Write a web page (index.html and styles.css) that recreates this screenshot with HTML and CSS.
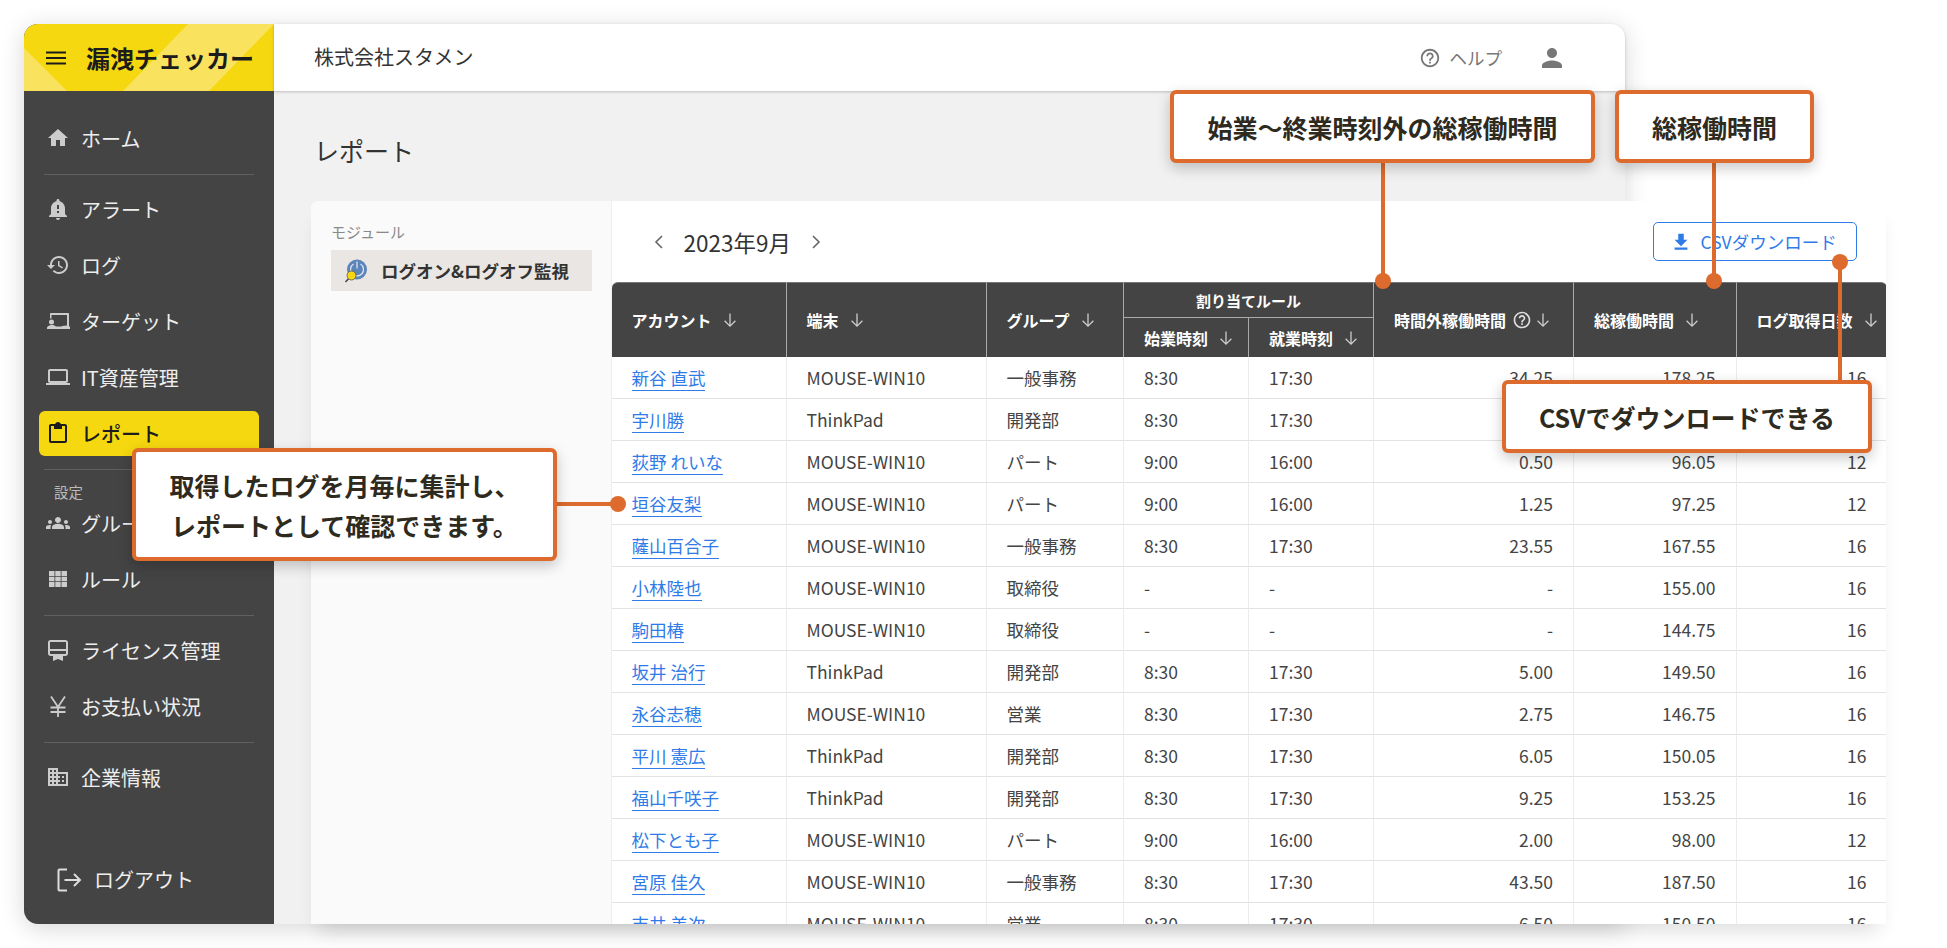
FILE: index.html
```html
<!DOCTYPE html>
<html lang="ja">
<head>
  <meta charset="UTF-8">
  <title>漏洩チェッカー レポート</title>
  <link rel="stylesheet" href="styles.css">
</head>
<body>

<svg class="defs" width="0" height="0">
  <symbol id="i-down" viewBox="0 0 16 16"><path d="M8 1.5v12.5M2.6 8.8 8 14.2l5.4-5.4" fill="none" stroke="currentColor" stroke-width="1.3"/></symbol>
  <symbol id="i-help" viewBox="0 0 24 24"><path fill="currentColor" d="M11 18h2v-2h-2v2zm1-16C6.48 2 2 6.48 2 12s4.48 10 10 10 10-4.48 10-10S17.52 2 12 2zm0 18c-4.41 0-8-3.59-8-8s3.59-8 8-8 8 3.59 8 8-3.59 8-8 8zm0-14c-2.21 0-4 1.79-4 4h2c0-1.1.9-2 2-2s2 .9 2 2c0 2-3 1.75-3 5h2c0-2.25 3-2.5 3-5 0-2.21-1.79-4-4-4z"/></symbol>
</svg>

<div class="app">
  <aside class="sidebar">
    <div class="logo">
      <svg class="logo-bg" viewBox="0 0 250 67" preserveAspectRatio="none">
        <path d="M164 0H250L185 67H99zM0 24 43 67H0z" fill="#f9e25e"/>
      </svg>
      <svg class="menu-icon" viewBox="0 0 24 24"><path fill="currentColor" d="M2 18.5h20v-2H2zm0-5.5h20v-2H2zM2 5.500v2h20v-2z"/></svg>
      <span class="logo-text">漏洩チェッカー</span>
    </div>

    <nav class="nav">
      <div class="nav-group">
        <a class="nav-item"><svg viewBox="0 0 24 24"><path d="M10 20v-6h4v6h5v-8h3L12 3 2 12h3v8z"/></svg>ホーム</a>
      </div>
      <div class="nav-group">
        <a class="nav-item"><svg viewBox="0 0 24 24"><path d="M12 23c1.100 0 1.990-.89 1.990-1.990h-3.980c0 1.100.89 1.990 1.990 1.990zm7-6v-6c0-3.350-2.360-6.150-5.500-6.830V3.500C13.500 2.670 12.830 2 12 2s-1.500.67-1.500 1.500v.67C7.360 4.850 5 7.650 5 11v6l-2 2v1h18v-1l-2-2zm-6-1h-2v-2h2v2zm0-4h-2V8h2v4z"/></svg>アラート</a>
        <a class="nav-item"><svg viewBox="0 0 24 24"><path d="M13 3c-4.970 0-9 4.030-9 9H1l3.890 3.890.07.14L9 12H6c0-3.870 3.130-7 7-7s7 3.130 7 7-3.130 7-7 7c-1.930 0-3.680-.79-4.940-2.060l-1.420 1.420C8.270 19.990 10.510 21 13 21c4.970 0 9-4.030 9-9s-4.030-9-9-9zm-1 5v5l4.280 2.540.72-1.210-3.500-2.080V8H12z"/></svg>ログ</a>
        <a class="nav-item"><svg viewBox="0 0 24 24"><path d="M5 4h17c.6 0 1 .4 1 1v12.500h1V20H1v-1c0-2 3-3 5-3s3 .7 4 1.500h6V17l5-.5V6H5.500v3.500H4V5c0-.6.4-1 1-1zM5.500 10.500a2.500 2.500 0 1 1 0 5 2.500 2.500 0 0 1 0-5z"/></svg>ターゲット</a>
        <a class="nav-item"><svg viewBox="0 0 24 24"><path d="M20 18c1.100 0 1.990-.9 1.990-2L22 6c0-1.100-.9-2-2-2H4c-1.100 0-2 .9-2 2v10c0 1.100.9 2 2 2H0v2h24v-2h-4zM4 6h16v10H4V6z"/></svg>IT資産管理</a>
        <a class="nav-item active"><svg viewBox="0 0 24 24"><path d="M19 3h-4.180C14.400 1.840 13.300 1 12 1c-1.300 0-2.400.84-2.820 2H5c-1.100 0-2 .9-2 2v15c0 1.100.9 2 2 2h14c1.100 0 2-.9 2-2V5c0-1.100-.9-2-2-2zm0 17H5V5h3v3h8V5h3v15z"/></svg>レポート</a>
      </div>
      <div class="nav-group">
        <div class="nav-label">設定</div>
        <a class="nav-item"><svg viewBox="0 0 24 24"><path d="M12 12.750c1.630 0 3.070.39 4.240.9 1.080.48 1.760 1.560 1.760 2.730V18H6v-1.610c0-1.180.68-2.260 1.760-2.730 1.170-.52 2.610-.91 4.240-.91zM4 13c1.100 0 2-.9 2-2s-.9-2-2-2-2 .9-2 2 .9 2 2 2zm1.130 1.100c-.37-.06-.74-.1-1.130-.1-.99 0-1.930.21-2.780.58C.48 14.900 0 15.620 0 16.430V18h4.500v-1.610c0-.83.23-1.610.63-2.290zM20 13c1.100 0 2-.9 2-2s-.9-2-2-2-2 .9-2 2 .9 2 2 2zm4 3.430c0-.81-.48-1.530-1.220-1.850-.85-.37-1.790-.58-2.780-.58-.39 0-.76.04-1.130.1.4.68.63 1.460.63 2.290V18H24v-1.570zM12 6c1.660 0 3 1.340 3 3s-1.340 3-3 3-3-1.340-3-3 1.340-3 3-3z"/></svg>グループ</a>
        <a class="nav-item"><svg viewBox="0 0 24 24"><path d="M3 4h5.500v5H3zM9.300 4h5.400v5H9.300zM15.500 4H21v5h-5.500zM3 9.800h5.500v4.400H3zM9.300 9.800h5.400v4.400H9.300zM15.500 9.800H21v4.400h-5.500zM3 15h5.500v5H3zM9.300 15h5.400v5H9.300zM15.500 15H21v5h-5.500z"/></svg>ルール</a>
      </div>
      <div class="nav-group">
        <a class="nav-item"><svg viewBox="0 0 24 24"><path d="M4.500 2h15C20.900 2 22 3.100 22 4.500v11c0 1.400-1.100 2.500-2.500 2.500H17v5l-5-2-5 2v-5H4.500C3.100 18 2 16.900 2 15.500v-11C2 3.100 3.100 2 4.500 2zM4 4v7h16V4zm0 9v2.500c0 .3.200.5.500.5h15c.3 0 .5-.2.500-.5V13z"/></svg>ライセンス管理</a>
        <a class="nav-item"><svg viewBox="0 0 24 24"><path d="M5 2.500 12 13l7-10.500M4.500 13.500h15M4.500 18h15M12 13v10" fill="none" stroke="#ccc" stroke-width="1.800"/></svg>お支払い状況</a>
      </div>
      <div class="nav-group last">
        <a class="nav-item"><svg viewBox="0 0 24 24"><path d="M12 7V3H2v18h20V7H12zM6 19H4v-2h2v2zm0-4H4v-2h2v2zm0-4H4V9h2v2zm0-4H4V5h2v2zm4 12H8v-2h2v2zm0-4H8v-2h2v2zm0-4H8V9h2v2zm0-4H8V5h2v2zm10 12h-8v-2h2v-2h-2v-2h2v-2h-2V9h8v10zm-2-8h-2v2h2v-2zm0 4h-2v2h2v-2z"/></svg>企業情報</a>
      </div>
    </nav>

    <a class="logout">
      <svg viewBox="0 0 26 26"><path d="M11 2.500H3.500a1 1 0 0 0-1 1v19a1 1 0 0 0 1 1H11M8.500 13H24M18 7l6 6-6 6" fill="none" stroke="#ddd" stroke-width="2"/></svg>
      ログアウト
    </a>
  </aside>

  <main class="main">
    <header class="topbar">
      <span class="company">株式会社スタメン</span>
      <div class="top-actions">
        <span class="help"><svg><use href="#i-help"/></svg>ヘルプ</span>
        <svg class="user" viewBox="0 0 24 24"><path fill="currentColor" d="M12 12c2.210 0 4-1.790 4-4s-1.790-4-4-4-4 1.790-4 4 1.790 4 4 4zm0 2c-2.670 0-8 1.340-8 4v2h16v-2c0-2.660-5.330-4-8-4z"/></svg>
      </div>
    </header>

    <h1 class="page-title">レポート</h1>

    <section class="card">
      <div class="modules">
        <div class="modules-label">モジュール</div>
        <div class="module">
          <svg viewBox="0 0 26 26">
            <circle cx="14" cy="11.500" r="10" fill="#5d84b8"/>
            <path d="M14 3.500v7M10.500 6a6.500 6.500 0 1 0 7 0" fill="none" stroke="#d8e4f2" stroke-width="1.300"/>
            <path d="M8 18 2.500 24" stroke="#444" stroke-width="1.500"/>
            <circle cx="8.500" cy="17.500" r="4.500" fill="#f5d80f" stroke="#555" stroke-width=".8"/>
          </svg>
          ログオン&amp;ログオフ監視
        </div>
      </div>

      <div class="report">
        <div class="toolbar">
          <div class="month">
            <svg class="chev" viewBox="0 0 10 16"><path d="M8 2 2 8l6 6" fill="none" stroke="currentColor" stroke-width="1.600"/></svg>
            <span class="month-text">2023年9月</span>
            <svg class="chev" viewBox="0 0 10 16"><path d="m2 2 6 6-6 6" fill="none" stroke="currentColor" stroke-width="1.600"/></svg>
          </div>
          <button class="csv-btn">
            <svg viewBox="0 0 24 24"><path fill="currentColor" d="M5 20.500h14v-2.500H5zM19 9.500h-4V3H9v6.500H5l7 7z"/></svg>
            CSVダウンロード
          </button>
        </div>

        <table class="log-table">
          <colgroup>
            <col class="c1"><col class="c2"><col class="c3"><col class="c4"><col class="c5"><col class="c6"><col class="c7"><col class="c8">
          </colgroup>
          <thead>
            <tr class="head-top">
              <th rowspan="2"><div class="th-in">アカウント<svg class="sort"><use href="#i-down"/></svg></div></th>
              <th rowspan="2"><div class="th-in">端末<svg class="sort"><use href="#i-down"/></svg></div></th>
              <th rowspan="2"><div class="th-in">グループ<svg class="sort"><use href="#i-down"/></svg></div></th>
              <th colspan="2" class="center">割り当てルール</th>
              <th rowspan="2"><div class="th-in tight">時間外稼働時間<svg class="q"><use href="#i-help"/></svg><svg class="sort"><use href="#i-down"/></svg></div></th>
              <th rowspan="2"><div class="th-in">総稼働時間<svg class="sort"><use href="#i-down"/></svg></div></th>
              <th rowspan="2"><div class="th-in">ログ取得日数<svg class="sort"><use href="#i-down"/></svg></div></th>
            </tr>
            <tr class="head-sub">
              <th><div class="th-in">始業時刻<svg class="sort"><use href="#i-down"/></svg></div></th>
              <th><div class="th-in">就業時刻<svg class="sort"><use href="#i-down"/></svg></div></th>
            </tr>
          </thead>
          <tbody>
            <tr><td><a>新谷 直武</a></td><td>MOUSE-WIN10</td><td>一般事務</td><td>8:30</td><td>17:30</td><td class="num">34.25</td><td class="num">178.25</td><td class="num">16</td></tr>
            <tr><td><a>宇川勝</a></td><td>ThinkPad</td><td>開発部</td><td>8:30</td><td>17:30</td><td class="num">1.50</td><td class="num">145.50</td><td class="num">16</td></tr>
            <tr><td><a>荻野 れいな</a></td><td>MOUSE-WIN10</td><td>パート</td><td>9:00</td><td>16:00</td><td class="num">0.50</td><td class="num">96.05</td><td class="num">12</td></tr>
            <tr><td><a>垣谷友梨</a></td><td>MOUSE-WIN10</td><td>パート</td><td>9:00</td><td>16:00</td><td class="num">1.25</td><td class="num">97.25</td><td class="num">12</td></tr>
            <tr><td><a>薩山百合子</a></td><td>MOUSE-WIN10</td><td>一般事務</td><td>8:30</td><td>17:30</td><td class="num">23.55</td><td class="num">167.55</td><td class="num">16</td></tr>
            <tr><td><a>小林陸也</a></td><td>MOUSE-WIN10</td><td>取締役</td><td>-</td><td>-</td><td class="num">-</td><td class="num">155.00</td><td class="num">16</td></tr>
            <tr><td><a>駒田椿</a></td><td>MOUSE-WIN10</td><td>取締役</td><td>-</td><td>-</td><td class="num">-</td><td class="num">144.75</td><td class="num">16</td></tr>
            <tr><td><a>坂井 治行</a></td><td>ThinkPad</td><td>開発部</td><td>8:30</td><td>17:30</td><td class="num">5.00</td><td class="num">149.50</td><td class="num">16</td></tr>
            <tr><td><a>永谷志穂</a></td><td>MOUSE-WIN10</td><td>営業</td><td>8:30</td><td>17:30</td><td class="num">2.75</td><td class="num">146.75</td><td class="num">16</td></tr>
            <tr><td><a>平川 憲広</a></td><td>ThinkPad</td><td>開発部</td><td>8:30</td><td>17:30</td><td class="num">6.05</td><td class="num">150.05</td><td class="num">16</td></tr>
            <tr><td><a>福山千咲子</a></td><td>ThinkPad</td><td>開発部</td><td>8:30</td><td>17:30</td><td class="num">9.25</td><td class="num">153.25</td><td class="num">16</td></tr>
            <tr><td><a>松下とも子</a></td><td>MOUSE-WIN10</td><td>パート</td><td>9:00</td><td>16:00</td><td class="num">2.00</td><td class="num">98.00</td><td class="num">12</td></tr>
            <tr><td><a>宮原 佳久</a></td><td>MOUSE-WIN10</td><td>一般事務</td><td>8:30</td><td>17:30</td><td class="num">43.50</td><td class="num">187.50</td><td class="num">16</td></tr>
            <tr><td><a>吉井 美次</a></td><td>MOUSE-WIN10</td><td>営業</td><td>8:30</td><td>17:30</td><td class="num">6.50</td><td class="num">150.50</td><td class="num">16</td></tr>
          </tbody>
        </table>
      </div>
    </section>
  </main>
</div>

<!-- annotations over the screen -->
<div class="lead lead-a"></div>
<div class="lead lead-b"></div>
<div class="lead lead-c"></div>
<div class="lead lead-d"></div>
<div class="callout call-a">始業〜終業時刻外の総稼働時間</div>
<div class="callout call-b">総稼働時間</div>
<div class="callout call-c">CSVでダウンロードできる</div>
<div class="callout call-d">取得したログを月毎に集計し、<br>レポートとして確認できます。</div>

</body>
</html>
```

FILE: styles.css
```css
:root {
  --dark: #444;
  --yellow: #f5d80f;
  --orange: #dd6b2d;
  --blue: #2f7be8;
  --line: #e2e2e2;
}

* { box-sizing: border-box; }

body {
  margin: 0;
  padding: 24px;
  height: 948px;
  overflow: hidden;
  position: relative;
  background: #fff;
  color: var(--dark);
  font-family: "Noto Sans CJK JP", "Noto Sans", sans-serif;
}

.defs { position: absolute; }

.app {
  display: flex;
  width: 1601px;
  height: 900px;
  border-radius: 14px 14px 0 14px;
  box-shadow: 0 4px 24px rgba(0,0,0,0.16);
}

/* sidebar */
.sidebar {
  width: 250px;
  flex-shrink: 0;
  display: flex;
  flex-direction: column;
  background: var(--dark);
  border-radius: 14px 0 0 14px;
  color: #eee;
}

.logo {
  position: relative;
  height: 67px;
  display: flex;
  align-items: center;
  padding-left: 20px;
  background: var(--yellow);
  border-radius: 14px 0 0 0;
  overflow: hidden;
  color: #1c1c1c;
}

.logo-bg {
  position: absolute;
  left: 0;
  top: 0;
  width: 100%;
  height: 100%;
}

.menu-icon {
  position: relative;
  width: 24px;
  height: 24px;
  margin-right: 18px;
}

.logo-text {
  position: relative;
  font-size: 24px;
  font-weight: 700;
  letter-spacing: 0;
  white-space: nowrap;
}

.nav {
  flex: 1;
  padding: 24.500px 15px 0;
}

.nav-group {
  border-bottom: 1px solid #606060;
  padding-bottom: 13px;
  margin-bottom: 12px;
  margin-left: 5px;
  margin-right: 5px;
}

.nav-group.last { border-bottom: none; }

.nav-item {
  display: flex;
  align-items: center;
  height: 45px;
  margin: 0 -5px;
  padding-left: 7px;
  font-size: 20px;
  border-radius: 6px;
  color: #eee;
  white-space: nowrap;
}

.nav-item + .nav-item { margin-top: 11px; }

.nav-item svg {
  width: 24px;
  height: 24px;
  margin-right: 11px;
  fill: #ccc;
  flex-shrink: 0;
}

.nav-item.active {
  background: var(--yellow);
  color: #1c1c1c;
  font-weight: 500;
}

.nav-item.active svg { fill: #1c1c1c; }

.nav-label {
  font-size: 14.500px;
  color: #bbb;
  line-height: 20px;
  padding-left: 10px;
  margin-top: 5px;
  margin-bottom: -1px;
}

.logout {
  display: flex;
  align-items: center;
  height: 45px;
  margin-bottom: 22px;
  padding-left: 32px;
  font-size: 20px;
  color: #eee;
}

.logout svg {
  width: 26px;
  height: 26px;
  margin-right: 12px;
}

/* main area */
.main {
  flex: 1;
  min-width: 0;
  display: flex;
  flex-direction: column;
  background: #f1f1f1;
  border-radius: 0 14px 0 0;
}

.topbar {
  height: 67px;
  flex-shrink: 0;
  display: flex;
  align-items: center;
  justify-content: space-between;
  padding: 0 58px 0 40px;
  background: #fff;
  border-radius: 0 14px 0 0;
  box-shadow: 0 1px 3px rgba(0,0,0,0.22);
  position: relative;
}

.company {
  font-size: 20px;
  color: #333;
  margin-top: -2px;
}

.top-actions {
  display: flex;
  align-items: center;
  gap: 35px;
  color: #777;
}

.help {
  display: flex;
  align-items: center;
  gap: 9px;
  font-size: 17.500px;
}

.help svg {
  width: 22px;
  height: 22px;
}

.user {
  width: 30px;
  height: 30px;
}

.page-title {
  margin: 0;
  padding-left: 40px;
  height: 110px;
  line-height: 118px;
  font-size: 25px;
  font-weight: 400;
  color: #333;
  flex-shrink: 0;
}

.card {
  display: flex;
  width: 1575px;
  height: 723px;
  margin-left: 37px;
  overflow: hidden;
  background: #fff;
  box-shadow: 0 14px 20px -8px rgba(0,0,0,0.14);
  border-radius: 8px 0 0 0;
}

.modules {
  width: 300.500px;
  flex-shrink: 0;
  padding: 20px 19px 0 20px;
  background: #fafafa;
  border-right: 1px solid #eee;
}

.modules-label {
  font-size: 15px;
  line-height: 22px;
  color: #8a8a8a;
  margin-bottom: 7px;
}

.module {
  display: flex;
  align-items: center;
  height: 41px;
  padding-left: 12px;
  background: #e9e6e3;
  font-size: 17.500px;
  font-weight: 700;
  color: #333;
  white-space: nowrap;
}

.module svg {
  width: 26px;
  height: 26px;
  margin-right: 12px;
}

.report {
  width: 1275px;
  flex-shrink: 0;
}

.toolbar {
  height: 81px;
  display: flex;
  align-items: center;
  justify-content: space-between;
  padding: 0 30px 0 42px;
}

.month {
  display: flex;
  align-items: center;
  gap: 20px;
}

.month-text {
  font-size: 22.500px;
  color: #333;
}

.chev {
  width: 10px;
  height: 16px;
  color: #666;
}

.csv-btn {
  display: flex;
  align-items: center;
  gap: 9px;
  width: 204px;
  height: 39px;
  padding: 0 0 0 16px;
  background: #fff;
  border: 1.500px solid var(--blue);
  border-radius: 5px;
  color: var(--blue);
  font: inherit;
  font-size: 17.500px;
  white-space: nowrap;
}

.csv-btn svg {
  width: 22px;
  height: 22px;
}

/* table */
.log-table {
  width: 1275px;
  table-layout: fixed;
  border-collapse: separate;
  border-spacing: 0;
  font-size: 17.500px;
}

.c1 { width: 175px; }
.c2 { width: 200px; }
.c3 { width: 137.500px; }
.c4 { width: 125px; }
.c5 { width: 125px; }
.c6 { width: 200px; }
.c7 { width: 162.500px; }
.c8 { width: 150px; }

.log-table th {
  background: var(--dark);
  color: #fff;
  font-size: 16px;
  font-weight: 700;
  text-align: left;
  padding: 0 0 0 20px;
  border-right: 1px solid #aaa;
  border-top: 1px solid #777;
  white-space: nowrap;
}

.log-table thead tr:first-child th:first-child { border-top-left-radius: 6px; }
.log-table thead tr:first-child th:last-child { border-top-right-radius: 6px; border-right: none; }

.head-top th { height: 35px; }
.head-sub th {
  height: 40px;
  border-top: 1px solid #aaa;
}

.log-table th.center {
  text-align: center;
  padding: 0;
  font-size: 15px;
}

.th-in {
  display: flex;
  align-items: center;
}

.sort {
  width: 16px;
  height: 16px;
  margin-left: 10px;
  color: #ccc;
  flex-shrink: 0;
}

.q {
  width: 20px;
  height: 20px;
  margin-left: 6px;
  color: #ddd;
  flex-shrink: 0;
}

.tight .sort { margin-left: 3px; }

.log-table td {
  height: 42px;
  padding: 0 20px;
  border-right: 1px solid #ececec;
  border-bottom: 1.500px solid var(--line);
  background: #fff;
  white-space: nowrap;
  line-height: 24px;
}

.log-table td:last-child { border-right: none; }

.log-table td a {
  color: var(--blue);
  border-bottom: 1.500px solid var(--blue);
  display: inline-block;
  line-height: 25px;
}

.log-table td.num { text-align: right; }

/* callouts */
.callout {
  position: absolute;
  display: flex;
  align-items: center;
  justify-content: center;
  background: #fff;
  border: 4px solid var(--orange);
  border-radius: 6px;
  color: #2e2a1e;
  font-size: 25px;
  font-weight: 700;
  line-height: 40px;
  text-align: center;
  box-shadow: 0 5px 14px rgba(0,0,0,0.22);
  white-space: nowrap;
}

.call-a { left: 1170px; top: 90px; width: 425px; height: 73px; }
.call-b { left: 1615px; top: 90px; width: 199px; height: 73px; }
.call-c { left: 1502px; top: 380px; width: 370px; height: 73px; }
.call-d { left: 132px; top: 448px; width: 425px; height: 113px; }

.lead {
  position: absolute;
  background: var(--orange);
}

.lead::after {
  content: "";
  position: absolute;
  width: 16px;
  height: 16px;
  border-radius: 50%;
  background: var(--orange);
}

.lead-a, .lead-b { top: 160px; width: 4px; height: 121px; }
.lead-a { left: 1381px; }
.lead-b { left: 1712px; }
.lead-a::after, .lead-b::after { left: -6px; bottom: -8px; }

.lead-c { left: 1838px; top: 262px; width: 4px; height: 120px; }
.lead-c::after { left: -6px; top: -8px; }

.lead-d { left: 555px; top: 502px; width: 63px; height: 4px; }
.lead-d::after { right: -8px; top: -6px; }
```
